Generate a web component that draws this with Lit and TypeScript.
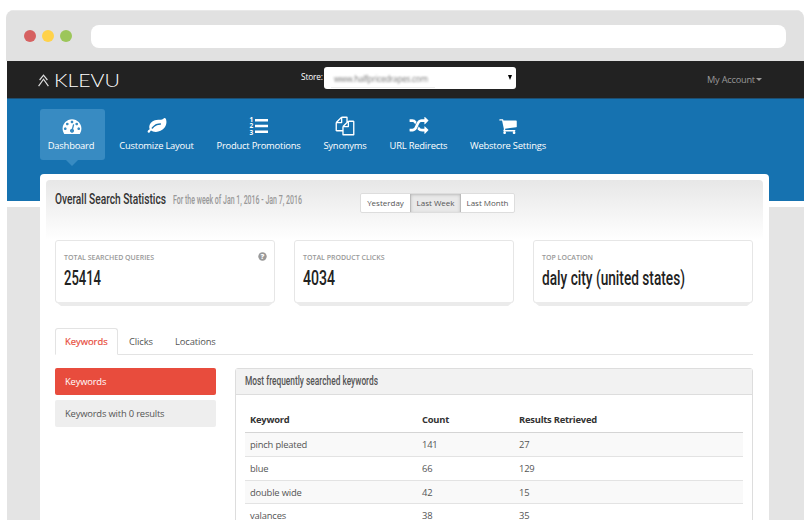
import { LitElement, html, css, svg } from "lit";
import { customElement, property } from "lit/decorators.js";

const ICONS: Record<string, string> = {
  gauge: "M384 1152q0-53-37.5-90.5t-90.5-37.5-90.5 37.5-37.5 90.5 37.5 90.5 90.5 37.5 90.5-37.5 37.5-90.5zm192-448q0-53-37.5-90.5t-90.5-37.5-90.5 37.5-37.5 90.5 37.5 90.5 90.5 37.5 90.5-37.5 37.5-90.5zm428 481l101-382q6-26-7.5-48.5t-38.5-29.5-48 6.5-30 39.5l-101 382q-60 5-107 43.5t-63 98.5q-20 77 20 146t117 89 146-20 89-117q16-60-6-117t-72-91zm660-33q0-53-37.5-90.5t-90.5-37.5-90.5 37.5-37.5 90.5 37.5 90.5 90.5 37.5 90.5-37.5 37.5-90.5zm-640-640q0-53-37.5-90.5t-90.5-37.5-90.5 37.5-37.5 90.5 37.5 90.5 90.5 37.5 90.5-37.5 37.5-90.5zm448 192q0-53-37.5-90.5t-90.5-37.5-90.5 37.5-37.5 90.5 37.5 90.5 90.5 37.5 90.5-37.5 37.5-90.5zm320 448q0 261-141 483-19 29-54 29h-1402q-35 0-54-29-141-221-141-483 0-182 71-348t191-286 286-191 348-71 348 71 286 191 191 286 71 348z",
  leaf: "M1280 704q0-26-19-45t-45-19q-172 0-318 49.5t-259.5 134-235.5 219.5q-19 21-19 45 0 26 19 45t45 19q24 0 45-19 27-24 74-71t67-66q137-124 268.5-176t313.5-52q26 0 45-19t19-45zm512-198q0 95-20 193-46 224-184.5 383t-357.5 268q-214 108-438 108-148 0-286-47-15-5-88-42t-96-37q-16 0-39.5 32t-45 70-52.5 70-60 32q-43 0-63.5-17.5t-45.5-59.5q-2-4-6-11t-5.5-10-3-9.5-1.5-13.5q0-35 31-73.5t68-65.5 68-56 31-48q0-4-14-38t-16-44q-9-51-9-104 0-115 43.5-220t119-184.5 170.5-139 204-95.5q55-18 145-25.5t179.5-9 178.5-6 163.5-24 113.5-56.5l29.5-29.5 29.5-28 27-20 36.5-16 43.5-4.5q39 0 70.5 46t47.5 112 24 124 8 96z",
  copy: "M1696 384q40 0 68 28t28 68v1216q0 40-28 68t-68 28h-960q-40 0-68-28t-28-68v-288h-544q-40 0-68-28t-28-68v-672q0-40 20-88t48-76l408-408q28-28 76-48t88-20h416q40 0 68 28t28 68v328q68-40 128-40h416zm-544 213l-299 299h299v-299zm-640-384l-299 299h299v-299zm196 647l316-316v-416h-384v416q0 40-28 68t-68 28h-416v640h512v-256q0-40 20-88t48-76zm956 804v-1152h-384v416q0 40-28 68t-68 28h-416v640h896z",
  shuffle: "M666 481q-60 92-137 273-22-45-37-72.5t-40.5-63.5-51-56.5-63-35-81.5-14.5h-224q-14 0-23-9t-9-23v-192q0-14 9-23t23-9h224q250 0 410 225zm1126 799q0 14-9 23l-320 320q-9 9-23 9-13 0-22.5-9.5t-9.5-22.5v-192q-32 0-85 .5t-81 1-73-1-71-5-64-10.5-63-18.5-58-28.5-59-40-55-53.5-56-69.5q59-93 136-273 22 45 37 72.5t40.5 63.5 51 56.5 63 35 81.5 14.5h256v-192q0-14 9-23t23-9q12 0 24 10l319 319q9 9 9 23zm0-896q0 14-9 23l-320 320q-9 9-23 9-13 0-22.5-9.5t-9.5-22.5v-192h-256q-48 0-87 15t-69 45-51 61.5-45 77.5q-32 62-78 171-29 66-49.5 111t-54 105-64 100-74 83-90 68.5-106.5 42-128 16.5h-224q-14 0-23-9t-9-23v-192q0-14 9-23t23-9h224q48 0 87-15t69-45 51-61.5 45-77.5q32-62 78-171 29-66 49.5-111t54-105 64-100 74-83 90-68.5 106.5-42 128-16.5h256v-192q0-14 9-23t23-9q12 0 24 10l319 319q9 9 9 23z",
  cart: "M704 1536q0 52-38 90t-90 38-90-38-38-90 38-90 90-38 90 38 38 90zm896 0q0 52-38 90t-90 38-90-38-38-90 38-90 90-38 90 38 38 90zm128-1088v512q0 24-16.5 42.5t-40.5 21.5l-1044 122q13 60 13 70 0 16-24 64h920q26 0 45 19t19 45-19 45-45 19h-1024q-26 0-45-19t-19-45q0-11 8-31.5t16-36 21.5-40 15.5-29.5l-177-823h-204q-26 0-45-19t-19-45 19-45 45-19h256q16 0 28.5 6.5t19.5 15.5 13 24.5 8 26 5.5 29.5 4.5 26h1201q26 0 45 19t19 45z",
};

@customElement("fit-text")
class FitText extends LitElement {
  @property() text = "";
  @property({ type: Number }) measure = 100;
  static styles = css`
    :host { display: block; line-height: 0; }
    svg { display: block; overflow: visible; height: 1em; }
    text { fill: currentColor; }
  `;
  render() {
    return html`<svg width=${this.measure}>
      <text x="0" y="0.86em" textLength=${this.measure} lengthAdjust="spacingAndGlyphs">${this.text}</text>
    </svg>`;
  }
}

@customElement("app-root")
class AppRoot extends LitElement {
  static styles = css`
    :host { display: block; width: 810px; height: 524px; overflow: hidden; background: #fff; font-family: "Open Sans", sans-serif; color: #555; }
    * { box-sizing: border-box; }
    .window { margin: 10px 6px 0; height: 510px; width: 798px; display: flex; flex-direction: column; overflow: hidden; border-radius: 8px 8px 0 0; }
    .chrome { height: 51px; flex: none; background: #e1e1e1; display: flex; align-items: center; padding: 0 18px; border-top: 1px solid #e9e9e9; }
    .dot { width: 12px; height: 12px; border-radius: 50%; margin-right: 6px; }
    .red { background: #d66161; } .yellow { background: #ffd24a; } .green { background: #9cc65a; }
    .address { flex: 1; height: 23px; background: #fff; border-radius: 8px; margin-left: 13px; }
    .site { flex: 1; min-height: 0; margin: 0 0 0 1px; display: flex; flex-direction: column; background: linear-gradient(#1672b0 140px, #fff 140px, #fff 146px, #e4e4e4 146px); }
    .topbar { height: 38px; flex: none; background: #222; border-bottom: 1px solid #1c4f74; display: flex; align-items: center; color: #fff; }
    .logo { display: flex; align-items: center; margin-left: 31px; gap: 5px; width: 263px; padding-top: 2px; }
    .mark { width: 11px; height: 13px; fill: none; stroke: #ddd; stroke-width: 1.2; margin-top: -1px; }
    .word { font: 300 17px Lato, sans-serif; -webkit-text-stroke: 0.5px #fff; }
    .store { font-size: 8.3px; letter-spacing: -0.15px; width: 23px; white-space: nowrap; margin-top: -6px; }
    .select { height: 22px; width: 192px; background: #fff; border-radius: 3px; margin-top: -4px; display: flex; align-items: center; justify-content: space-between; padding: 0 4px 0 7px; }
    .host { border-bottom: 1px solid #eee; height: 21px; line-height: 23px; width: 104px; padding-left: 3px; font-size: 8.2px; letter-spacing: -0.25px; color: #777; white-space: nowrap; }
    .host span { filter: blur(1px); display: block; }
    .down { border: 2.5px solid transparent; border-top: 5px solid #000; border-bottom: 0; }
    .account { margin-left: 191px; font-size: 9.2px; letter-spacing: -0.2px; color: #999; display: flex; align-items: center; gap: 1px; white-space: nowrap; }
    .caret { border: 3px solid transparent; border-top-color: #999; border-bottom: 0; }
    .nav { height: 75px; flex: none; display: flex; padding: 10px 0 0 33px; gap: 6px; color: #fff; }
    .item { position: relative; height: 51px; border-radius: 3px; display: flex; flex-direction: column; align-items: center; padding-top: 7px; font-size: 9.4px; letter-spacing: -0.21px; line-height: 14px; white-space: nowrap; flex: none; }
    .active { background: #388bc2; padding-right: 3px; }
    .active .icon { margin-left: 2px; }
    .active::after { content: ""; position: absolute; top: 51px; left: 26px; border: 6px solid transparent; border-top-color: #388bc2; border-bottom: 0; }
    .icon { width: 20px; height: 20px; fill: #fff; display: block; margin-bottom: 3px; }
    .digits { font: bold 6.5px "Open Sans", sans-serif; }
    .page { flex: 1; min-height: 0; width: 729px; margin-left: 33px; background: #fff; border-radius: 4px 4px 0 0; padding: 6px 6px 0; overflow: hidden; }
    .head { height: 60px; border-radius: 4px 4px 0 0; background: linear-gradient(#e7e7e7, #fff); padding: 12px 9px 0; display: flex; align-items: flex-start; }
    .title { font: 500 15.5px Roboto, sans-serif; color: #333; width: 118px; margin-top: -1px; }
    .week { font: 500 12px Roboto, sans-serif; color: #999; width: 187px; margin-top: 2px; }
    .range { display: flex; height: 20px; border: 1px solid #ddd; border-radius: 2px; background: #fff; font-size: 8px; line-height: 18px; color: #555; text-align: center; overflow: hidden; margin-top: 1px; }
    .range div { width: 49px; }
    .range .on { width: 51px; background: #e9e9e9; box-shadow: inset 0 1px 3px #bbb; border: solid #bbb; border-width: 0 1px; }
    .range .last { width: 53px; }
    .body { padding: 0 10px 0 9px; }
    .cards { display: grid; grid-template-columns: repeat(3, 1fr); gap: 19px; }
    .card { height: 63px; border: 1px solid #e6e6e6; border-radius: 3px; background: #fff; padding: 11px 8px; position: relative; }
    .card::after { content: ""; position: absolute; left: 0; right: 0; top: 61px; height: 4px; background: #ebebeb; clip-path: polygon(0 0, 100% 0, calc(100% - 5px) 100%, 5px 100%); }
    .label { font-size: 7px; line-height: 12px; font-weight: 600; color: #999; white-space: nowrap; }
    .value { font: 500 20px Roboto, sans-serif; color: #222; margin-top: 4px; }
    .help { position: absolute; right: 7px; top: 11px; width: 9px; height: 9px; }
    .tabs { margin-top: 25px; height: 27px; border-bottom: 1px solid #e3e3e3; display: flex; font-size: 9.4px; letter-spacing: -0.12px; line-height: 25px; }
    .tab { padding: 1px 0 0 11px; }
    .tab.sel { width: 63px; height: 27px; border: 1px solid #e3e3e3; border-bottom-color: #fff; border-radius: 3px 3px 0 0; color: #e84c3d; padding: 0 0 0 9px; -webkit-text-stroke: 0.2px #e84c3d; background: #fff; letter-spacing: 0; }
    .clicks { width: 46px; }
    .cols { margin-top: 13px; display: flex; gap: 19px; }
    .side { width: 161px; flex: none; font-size: 9.4px; letter-spacing: -0.18px; }
    .pill { height: 27px; line-height: 27px; border-radius: 2px; padding-left: 10px; background: #eee; margin-bottom: 5px; }
    .pill.sel { background: #e84c3d; color: #fff; }
    .panel { flex: 1; height: 200px; border: 1px solid #ddd; border-radius: 3px 3px 0 0; }
    .phead { height: 26px; background: #f2f2f2; border-bottom: 1px solid #ddd; padding: 6px 9px; font: 500 12px Roboto, sans-serif; color: #555; }
    .table { margin: 14px 9px 0 9px; font-size: 9.4px; letter-spacing: -0.18px; }
    .row { display: grid; grid-template-columns: 172px 97px 1fr; height: 23.7px; line-height: 23px; padding: 0 5px; border-bottom: 1px solid #e3e3e3; }
    .row.th { height: 24.4px; font-weight: 700; color: #333; border-bottom: 1px solid #d5d5d5; line-height: 22px; letter-spacing: -0.23px; }
    .odd { background: #f9f9f9; }
  `;

  private nav = [
    { icon: "gauge", label: "Dashboard", width: 65 },
    { icon: "leaf", label: "Customize Layout", width: 91 },
    { icon: "list", label: "Product Promotions", width: 101 },
    { icon: "copy", label: "Synonyms", width: 60 },
    { icon: "shuffle", label: "URL Redirects", width: 75 },
    { icon: "cart", label: "Webstore Settings", width: 92 },
  ];
  private rows = [
    ["pinch pleated", "141", "27"],
    ["blue", "66", "129"],
    ["double wide", "42", "15"],
    ["valances", "38", "35"],
  ];
  private cards = [
    { label: "TOTAL SEARCHED QUERIES", value: "25414", measure: 37, help: true },
    { label: "TOTAL PRODUCT CLICKS", value: "4034", measure: 32, help: false },
    { label: "TOP LOCATION", value: "daly city (united states)", measure: 143, help: false },
  ];

  private icon(name: string) {
    if (name === "list")
      return html`<svg class="icon" viewBox="0 0 20 20">
        <path d="M6 3h13v2.4H6zM6 8.8h13v2.4H6zM6 14.6h13v2.4H6z" />
        <g class="digits"><text x="0.6" y="6">1</text><text x="0.6" y="12.4">2</text><text x="0.6" y="18.8">3</text></g>
      </svg>`;
    return html`<svg class="icon" viewBox="0 0 1900 1900">${svg`<path transform="translate(54 54)" d=${ICONS[name]}></path>`}</svg>`;
  }

  render() {
    return html`
      <div class="window">
        <div class="chrome">
          <div class="dot red"></div><div class="dot yellow"></div><div class="dot green"></div>
          <div class="address"></div>
        </div>
        <div class="site">
          <div class="topbar">
            <div class="logo">
              <svg class="mark" viewBox="0 0 11 13"><path d="M1.6 6 5.5 1.2 9.4 6M.6 12.2 5.5 5.2 10.4 12.2" /></svg>
              <fit-text class="word" text="KLEVU" measure="66"></fit-text>
            </div>
            <div class="store">Store:</div>
            <div class="select"><div class="host"><span>www.halfpricedrapes.com</span></div><div class="down"></div></div>
            <div class="account">My Account <div class="caret"></div></div>
          </div>
          <div class="nav">
            ${this.nav.map((n, i) => html`<div class="item ${i === 0 ? "active" : ""}" style="width:${n.width}px">${this.icon(n.icon)}<span>${n.label}</span></div>`)}
          </div>
          <div class="page">
            <div class="head">
              <fit-text class="title" text="Overall Search Statistics" measure="111"></fit-text>
              <fit-text class="week" text="For the week of Jan 1, 2016 - Jan 7, 2016" measure="129"></fit-text>
              <div class="range"><div>Yesterday</div><div class="on">Last Week</div><div class="last">Last Month</div></div>
            </div>
            <div class="body">
              <div class="cards">
                ${this.cards.map((c) => html`<div class="card">
                  <div class="label">${c.label}</div>
                  <fit-text class="value" text=${c.value} measure=${c.measure}></fit-text>
                  ${c.help ? html`<svg class="help" viewBox="0 0 9 9"><circle cx="4.5" cy="4.5" r="4.2" fill="#999" /><text x="4.5" y="7.2" text-anchor="middle" font-size="7.5" font-weight="800" fill="#fff">?</text></svg>` : ""}
                </div>`)}
              </div>
              <div class="tabs"><div class="tab sel">Keywords</div><div class="tab clicks">Clicks</div><div class="tab">Locations</div></div>
              <div class="cols">
                <div class="side"><div class="pill sel">Keywords</div><div class="pill">Keywords with 0 results</div></div>
                <div class="panel">
                  <div class="phead"><fit-text text="Most frequently searched keywords" measure="133"></fit-text></div>
                  <div class="table">
                    <div class="row th"><span>Keyword</span><span>Count</span><span>Results Retrieved</span></div>
                    ${this.rows.map((r, i) => html`<div class="row ${i % 2 ? "" : "odd"}">${r.map((c) => html`<span>${c}</span>`)}</div>`)}
                  </div>
                </div>
              </div>
            </div>
          </div>
        </div>
      </div>`;
  }
}
